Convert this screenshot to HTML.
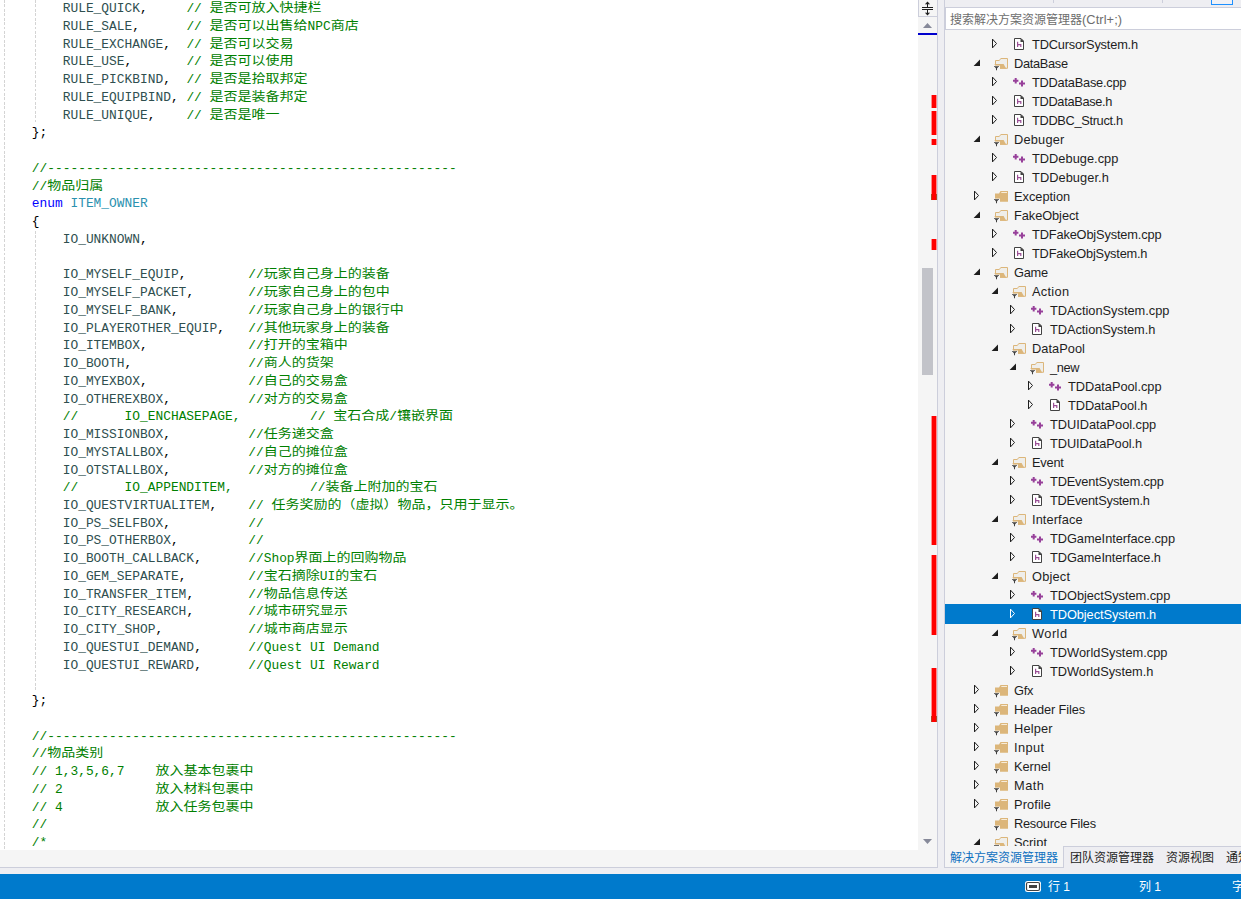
<!DOCTYPE html>
<html lang="zh-CN">
<head>
<meta charset="utf-8">
<title>TDObjectSystem.h - Visual Studio</title>
<style>
html,body{margin:0;padding:0}
body{width:1241px;height:899px;overflow:hidden;position:relative;background:#eeeef2;
  font-family:"Liberation Sans","Noto Sans CJK SC",sans-serif;font-size:12px;color:#1e1e1e}
div,span,svg{position:absolute;box-sizing:border-box}
/* ---------- editor ---------- */
#ed{left:0;top:0;width:918px;height:850px;background:#fff;overflow:hidden}
#hs{left:0;top:850px;width:918px;height:17px;background:#f5f5f5}
#hl{left:0;top:867px;width:918px;height:1px;background:#ccceDB}
.gd{width:1px;background:repeating-linear-gradient(to bottom,#d4d4d4 0,#d4d4d4 2.9px,transparent 2.9px,transparent 4.43px)}
.l{left:0;height:17.75px;line-height:17.75px;white-space:pre;
  font-family:"Liberation Mono","Noto Sans CJK SC",monospace;font-size:12.88px;color:#000}
.l span{top:0;white-space:pre}
.l span.c{top:0;font-size:14px;line-height:17.75px;transform-origin:50% 50%;transform:translateY(0px) scaleY(0.87);font-family:"Liberation Mono","Noto Sans CJK SC",monospace}
.g{color:#008000}.e{color:#2f4f4f}.k{color:#0000ff}.t{color:#2b91af}.p{color:#000}
/* ---------- vertical scrollbar ---------- */
#vs{left:918px;top:0;width:20px;height:868px;background:#f5f5f5;border-right:1px solid #ccceDB;border-bottom:1px solid #ccceDB}
#sp{left:0;top:0;width:20px;height:17px;background:#f5f5f5;border:1px solid #ccceDB;border-top:none}
.red{left:13px;width:6px;background:linear-gradient(to right,#ff8e8e 0,#ff8e8e 1px,#f00 1px,#f00 5px,#ff8e8e 5px)}
.red.dk{background:linear-gradient(to right,#b4461e 0,#b4461e 1px,#f00 1px,#f00 5px,#b4461e 5px)}
#th{left:4px;top:268px;width:11px;height:107px;background:#c2c3c9}
#bl{left:0;top:33px;width:19px;height:2px;background:#0000cd}
/* ---------- solution explorer ---------- */
#pl{left:944px;top:0;width:1px;height:868px;background:#ccceDB}
#tb{left:945px;top:0;width:296px;height:7px;background:#eeeef2}
#sb{left:945px;top:7px;width:300px;height:23px;background:#fff;border:1px solid #ccceDB}
#sb span{left:4px;top:1px;line-height:21px;color:#6d6d6d;white-space:nowrap;font-size:12px}
#tr{left:945px;top:30px;width:296px;height:816px;background:#f5f5f5;overflow:hidden}
.r{left:0;width:296px;height:19px}
.r.sel{background:#007acc;color:#fff;height:20px}
.r.sel .x{top:4px}.r.sel .i{top:3px}.r.sel .n{top:1px}
.r .x{top:3px;color:#1e1e1e;overflow:visible}
.r.sel .x{color:#fff}
.r .i{top:2px}
.r .n{top:0;line-height:19px;white-space:nowrap;font-size:12.80px}
/* ---------- tabs ---------- */
#tabs{left:945px;top:846px;width:296px;height:22px;background:#eeeef2;border-top:1px solid #ccceDB}
#tabs span{top:1px;line-height:20px;white-space:nowrap;font-size:12px;color:#1e1e1e}
#at{left:-1px;top:-1px;width:120px;height:22px;background:#f5f5f5;border:1px solid #ccceDB;border-top:none}
/* ---------- status bar ---------- */
#st{left:0;top:874px;width:1241px;height:25px;background:#007acc;color:#fff}
#st span{top:1px;line-height:25px;font-size:12px;white-space:nowrap}
</style>
</head>
<body>
<svg width="0" height="0" style="position:absolute">
<defs>
  <g id="funnel">
    <path d="M0.3 9.6 H7 V14.6 H0.3 Z" fill="#f5f5f5"/>
    <path d="M1 10.2 H6 V11.1 H5.2 L4 12.4 V14.2 H3 V12.4 L1.8 11.1 H1 Z" fill="#424242"/>
  </g>
  <g id="i-fc">
    <path d="M2 4.5 H6 L7.5 2 H15 V12.7 H2 Z" fill="#dcb67a"/>
    <path d="M8.3 3.5 H14" stroke="#f7ecd9" stroke-width="1" fill="none"/>
    <use href="#funnel"/>
  </g>
  <g id="i-fo">
    <path d="M2.5 4.5 H6.3 L7.8 2.5 H14.5 V12.3 H2.5 Z" fill="#efeeea" stroke="#dcb67a" stroke-width="1"/>
    <path d="M1.4 8 H10.6 L13.2 12.8 H3.8 Z" fill="#dcb67a"/>
    <use href="#funnel"/>
  </g>
  <g id="i-h">
    <path d="M3.5 1.5 H10 L12.5 4 V12.5 H3.5 Z" fill="#fff" stroke="#424242" stroke-width="1"/>
    <path d="M9.5 1 L13 4.5 V5 H9.5 Z" fill="#424242"/>
    <path d="M6.6 4.7 V10 M6.6 7.6 H9.8 V10" stroke="#9b4f96" stroke-width="1.2" fill="none"/>
  </g>
  <g id="i-cpp">
    <path d="M2 5.8 H7.4 M4.7 3.1 V8.5" stroke="#97409a" stroke-width="2" fill="none"/>
    <path d="M8 8.4 H14 M11 5.4 V11.4" stroke="#97409a" stroke-width="2" fill="none"/>
  </g>
</defs>
</svg>

<div id="ed">
<div class="gd" style="left:4px;top:0;height:850px"></div>
<div class="gd" style="left:35px;top:0;height:122px"></div>
<div class="gd" style="left:35px;top:231px;height:460px"></div>
<div class="l" style="top:0.13px"><span class="e" style="left:62.72px">RULE_QUICK</span><span class="p" style="left:140.02px">,</span><span class="g" style="left:186.40px">// </span><span class="g c" style="left:209.59px">是否可放入快捷栏</span></div>
<div class="l" style="top:17.87px"><span class="e" style="left:62.72px">RULE_SALE</span><span class="p" style="left:132.29px">,</span><span class="g" style="left:186.40px">// </span><span class="g c" style="left:209.59px">是否可以出售给</span><span class="g" style="left:307.59px">NPC</span><span class="g c" style="left:330.78px">商店</span></div>
<div class="l" style="top:35.62px"><span class="e" style="left:62.72px">RULE_EXCHANGE</span><span class="p" style="left:163.21px">,</span><span class="g" style="left:186.40px">// </span><span class="g c" style="left:209.59px">是否可以交易</span></div>
<div class="l" style="top:53.36px"><span class="e" style="left:62.72px">RULE_USE</span><span class="p" style="left:124.56px">,</span><span class="g" style="left:186.40px">// </span><span class="g c" style="left:209.59px">是否可以使用</span></div>
<div class="l" style="top:71.11px"><span class="e" style="left:62.72px">RULE_PICKBIND</span><span class="p" style="left:163.21px">,</span><span class="g" style="left:186.40px">// </span><span class="g c" style="left:209.59px">是否是拾取邦定</span></div>
<div class="l" style="top:88.85px"><span class="e" style="left:62.72px">RULE_EQUIPBIND</span><span class="p" style="left:170.94px">,</span><span class="g" style="left:186.40px">// </span><span class="g c" style="left:209.59px">是否是装备邦定</span></div>
<div class="l" style="top:106.60px"><span class="e" style="left:62.72px">RULE_UNIQUE</span><span class="p" style="left:147.75px">,</span><span class="g" style="left:186.40px">// </span><span class="g c" style="left:209.59px">是否是唯一</span></div>
<div class="l" style="top:124.34px"><span class="p" style="left:31.80px">};</span></div>
<div class="l" style="top:159.83px"><span class="g" style="left:31.80px">//-----------------------------------------------------</span></div>
<div class="l" style="top:177.58px"><span class="g" style="left:31.80px">//</span><span class="g c" style="left:47.26px">物品归属</span></div>
<div class="l" style="top:195.32px"><span class="k" style="left:31.80px">enum</span><span class="t" style="left:70.45px">ITEM_OWNER</span></div>
<div class="l" style="top:213.07px"><span class="p" style="left:31.80px">{</span></div>
<div class="l" style="top:230.81px"><span class="e" style="left:62.72px">IO_UNKNOWN</span><span class="p" style="left:140.02px">,</span></div>
<div class="l" style="top:266.30px"><span class="e" style="left:62.72px">IO_MYSELF_EQUIP</span><span class="p" style="left:178.67px">,</span><span class="g" style="left:248.24px">//</span><span class="g c" style="left:263.70px">玩家自己身上的装备</span></div>
<div class="l" style="top:284.05px"><span class="e" style="left:62.72px">IO_MYSELF_PACKET</span><span class="p" style="left:186.40px">,</span><span class="g" style="left:248.24px">//</span><span class="g c" style="left:263.70px">玩家自己身上的包中</span></div>
<div class="l" style="top:301.79px"><span class="e" style="left:62.72px">IO_MYSELF_BANK</span><span class="p" style="left:170.94px">,</span><span class="g" style="left:248.24px">//</span><span class="g c" style="left:263.70px">玩家自己身上的银行中</span></div>
<div class="l" style="top:319.54px"><span class="e" style="left:62.72px">IO_PLAYEROTHER_EQUIP</span><span class="p" style="left:217.32px">,</span><span class="g" style="left:248.24px">//</span><span class="g c" style="left:263.70px">其他玩家身上的装备</span></div>
<div class="l" style="top:337.28px"><span class="e" style="left:62.72px">IO_ITEMBOX</span><span class="p" style="left:140.02px">,</span><span class="g" style="left:248.24px">//</span><span class="g c" style="left:263.70px">打开的宝箱中</span></div>
<div class="l" style="top:355.03px"><span class="e" style="left:62.72px">IO_BOOTH</span><span class="p" style="left:124.56px">,</span><span class="g" style="left:248.24px">//</span><span class="g c" style="left:263.70px">商人的货架</span></div>
<div class="l" style="top:372.77px"><span class="e" style="left:62.72px">IO_MYEXBOX</span><span class="p" style="left:140.02px">,</span><span class="g" style="left:248.24px">//</span><span class="g c" style="left:263.70px">自己的交易盒</span></div>
<div class="l" style="top:390.52px"><span class="e" style="left:62.72px">IO_OTHEREXBOX</span><span class="p" style="left:163.21px">,</span><span class="g" style="left:248.24px">//</span><span class="g c" style="left:263.70px">对方的交易盒</span></div>
<div class="l" style="top:408.26px"><span class="g" style="left:62.72px">//</span><span class="g" style="left:124.56px">IO_ENCHASEPAGE,</span><span class="g" style="left:310.08px">// </span><span class="g c" style="left:333.27px">宝石合成</span><span class="g" style="left:389.27px">/</span><span class="g c" style="left:397.00px">镶嵌界面</span></div>
<div class="l" style="top:426.01px"><span class="e" style="left:62.72px">IO_MISSIONBOX</span><span class="p" style="left:163.21px">,</span><span class="g" style="left:248.24px">//</span><span class="g c" style="left:263.70px">任务递交盒</span></div>
<div class="l" style="top:443.75px"><span class="e" style="left:62.72px">IO_MYSTALLBOX</span><span class="p" style="left:163.21px">,</span><span class="g" style="left:248.24px">//</span><span class="g c" style="left:263.70px">自己的摊位盒</span></div>
<div class="l" style="top:461.50px"><span class="e" style="left:62.72px">IO_OTSTALLBOX</span><span class="p" style="left:163.21px">,</span><span class="g" style="left:248.24px">//</span><span class="g c" style="left:263.70px">对方的摊位盒</span></div>
<div class="l" style="top:479.24px"><span class="g" style="left:62.72px">//</span><span class="g" style="left:124.56px">IO_APPENDITEM,</span><span class="g" style="left:310.08px">//</span><span class="g c" style="left:325.54px">装备上附加的宝石</span></div>
<div class="l" style="top:496.99px"><span class="e" style="left:62.72px">IO_QUESTVIRTUALITEM</span><span class="p" style="left:209.59px">,</span><span class="g" style="left:248.24px">// </span><span class="g c" style="left:271.43px">任务奖励的（虚拟）物品，只用于显示。</span></div>
<div class="l" style="top:514.73px"><span class="e" style="left:62.72px">IO_PS_SELFBOX</span><span class="p" style="left:163.21px">,</span><span class="g" style="left:248.24px">//</span></div>
<div class="l" style="top:532.48px"><span class="e" style="left:62.72px">IO_PS_OTHERBOX</span><span class="p" style="left:170.94px">,</span><span class="g" style="left:248.24px">//</span></div>
<div class="l" style="top:550.22px"><span class="e" style="left:62.72px">IO_BOOTH_CALLBACK</span><span class="p" style="left:194.13px">,</span><span class="g" style="left:248.24px">//Shop</span><span class="g c" style="left:294.62px">界面上的回购物品</span></div>
<div class="l" style="top:567.97px"><span class="e" style="left:62.72px">IO_GEM_SEPARATE</span><span class="p" style="left:178.67px">,</span><span class="g" style="left:248.24px">//</span><span class="g c" style="left:263.70px">宝石摘除</span><span class="g" style="left:319.70px">UI</span><span class="g c" style="left:335.16px">的宝石</span></div>
<div class="l" style="top:585.71px"><span class="e" style="left:62.72px">IO_TRANSFER_ITEM</span><span class="p" style="left:186.40px">,</span><span class="g" style="left:248.24px">//</span><span class="g c" style="left:263.70px">物品信息传送</span></div>
<div class="l" style="top:603.46px"><span class="e" style="left:62.72px">IO_CITY_RESEARCH</span><span class="p" style="left:186.40px">,</span><span class="g" style="left:248.24px">//</span><span class="g c" style="left:263.70px">城市研究显示</span></div>
<div class="l" style="top:621.20px"><span class="e" style="left:62.72px">IO_CITY_SHOP</span><span class="p" style="left:155.48px">,</span><span class="g" style="left:248.24px">//</span><span class="g c" style="left:263.70px">城市商店显示</span></div>
<div class="l" style="top:638.95px"><span class="e" style="left:62.72px">IO_QUESTUI_DEMAND</span><span class="p" style="left:194.13px">,</span><span class="g" style="left:248.24px">//Quest UI Demand</span></div>
<div class="l" style="top:656.69px"><span class="e" style="left:62.72px">IO_QUESTUI_REWARD</span><span class="p" style="left:194.13px">,</span><span class="g" style="left:248.24px">//Quest UI Reward</span></div>
<div class="l" style="top:692.18px"><span class="p" style="left:31.80px">};</span></div>
<div class="l" style="top:727.67px"><span class="g" style="left:31.80px">//-----------------------------------------------------</span></div>
<div class="l" style="top:745.42px"><span class="g" style="left:31.80px">//</span><span class="g c" style="left:47.26px">物品类别</span></div>
<div class="l" style="top:763.16px"><span class="g" style="left:31.80px">// 1,3,5,6,7</span><span class="g c" style="left:155.48px">放入基本包裹中</span></div>
<div class="l" style="top:780.91px"><span class="g" style="left:31.80px">// 2</span><span class="g c" style="left:155.48px">放入材料包裹中</span></div>
<div class="l" style="top:798.65px"><span class="g" style="left:31.80px">// 4</span><span class="g c" style="left:155.48px">放入任务包裹中</span></div>
<div class="l" style="top:816.40px"><span class="g" style="left:31.80px">//</span></div>
<div class="l" style="top:834.14px"><span class="g" style="left:31.80px">/*</span></div>
</div>
<div id="hs"></div>
<div id="hl"></div>

<div id="vs">
  <div id="sp">
    <svg style="left:3px;top:1px" width="11" height="15" viewBox="0 0 11 15">
      <path d="M0 6.5 H11 M0 8.5 H11 M5.5 1.2 V6 M5.5 9 V13.8" stroke="#1e1e1e" stroke-width="1" fill="none"/>
      <path d="M3.6 3.4 L5.5 1.3 L7.4 3.4 M3.6 11.6 L5.5 13.7 L7.4 11.6" stroke="#1e1e1e" stroke-width="1.1" fill="none"/>
    </svg>
  </div>
  <svg style="left:5px;top:23px" width="9" height="5" viewBox="0 0 9 5"><path d="M0 5 L4.5 0 L9 5 Z" fill="#868999"/></svg>
  <div id="bl"></div>
  <div class="red" style="top:95px;height:13px"></div><div class="red" style="top:111px;height:24px"></div><div class="red" style="top:139px;height:6px"></div><div class="red" style="top:175px;height:25px"></div><div class="red" style="top:239px;height:11px"></div><div class="red" style="top:416px;height:129px"></div><div class="red" style="top:555px;height:80px"></div><div class="red" style="top:668px;height:54px"></div><div class="red dk" style="top:194px;height:6px"></div><div class="red dk" style="top:716px;height:6px"></div>
  <div id="th"></div>
  <svg style="left:5px;top:839px" width="9" height="5" viewBox="0 0 9 5"><path d="M0 0 L4.5 5 L9 0 Z" fill="#868999"/></svg>
</div>

<div id="pl"></div>
<div id="tb">
  <div style="left:108px;top:0;width:1px;height:3px;background:#ccceDB"></div>
  <div style="left:217px;top:0;width:1px;height:3px;background:#ccceDB"></div>
  <div style="left:266px;top:-3px;width:22px;height:8px;border:1px solid #1e90ff;background:#f1f1f5"></div>
</div>
<div id="sb"><span>搜索解决方案资源管理器<i style="font-style:normal;font-size:12.80px;letter-spacing:0.085px">(Ctrl+;)</i></span></div>
<div id="tr">
<div class="r" style="top:5px"><svg class="x" style="left:46px" width="7" height="11" viewBox="0 0 7 11"><path d="M1.5 1.1 L5.5 5.5 L1.5 9.9 Z" fill="none" stroke="currentColor" stroke-width="1"/></svg><svg class="i" style="left:66px" width="16" height="16" viewBox="0 0 16 16"><use href="#i-h"/></svg><span class="n" style="left:87px;letter-spacing:-0.179px">TDCursorSystem.h</span></div>
<div class="r" style="top:24px"><svg class="x" style="left:28px" width="7" height="11" viewBox="0 0 7 11"><path d="M7 2.6 L7 9 L0.6 9 Z" fill="currentColor"/></svg><svg class="i" style="left:48px" width="16" height="16" viewBox="0 0 16 16"><use href="#i-fo"/></svg><span class="n" style="left:69px;letter-spacing:-0.308px">DataBase</span></div>
<div class="r" style="top:43px"><svg class="x" style="left:46px" width="7" height="11" viewBox="0 0 7 11"><path d="M1.5 1.1 L5.5 5.5 L1.5 9.9 Z" fill="none" stroke="currentColor" stroke-width="1"/></svg><svg class="i" style="left:66px" width="16" height="16" viewBox="0 0 16 16"><use href="#i-cpp"/></svg><span class="n" style="left:87px;letter-spacing:-0.230px">TDDataBase.cpp</span></div>
<div class="r" style="top:62px"><svg class="x" style="left:46px" width="7" height="11" viewBox="0 0 7 11"><path d="M1.5 1.1 L5.5 5.5 L1.5 9.9 Z" fill="none" stroke="currentColor" stroke-width="1"/></svg><svg class="i" style="left:66px" width="16" height="16" viewBox="0 0 16 16"><use href="#i-h"/></svg><span class="n" style="left:87px;letter-spacing:-0.318px">TDDataBase.h</span></div>
<div class="r" style="top:81px"><svg class="x" style="left:46px" width="7" height="11" viewBox="0 0 7 11"><path d="M1.5 1.1 L5.5 5.5 L1.5 9.9 Z" fill="none" stroke="currentColor" stroke-width="1"/></svg><svg class="i" style="left:66px" width="16" height="16" viewBox="0 0 16 16"><use href="#i-h"/></svg><span class="n" style="left:87px;letter-spacing:-0.327px">TDDBC_Struct.h</span></div>
<div class="r" style="top:100px"><svg class="x" style="left:28px" width="7" height="11" viewBox="0 0 7 11"><path d="M7 2.6 L7 9 L0.6 9 Z" fill="currentColor"/></svg><svg class="i" style="left:48px" width="16" height="16" viewBox="0 0 16 16"><use href="#i-fo"/></svg><span class="n" style="left:69px;letter-spacing:0.196px">Debuger</span></div>
<div class="r" style="top:119px"><svg class="x" style="left:46px" width="7" height="11" viewBox="0 0 7 11"><path d="M1.5 1.1 L5.5 5.5 L1.5 9.9 Z" fill="none" stroke="currentColor" stroke-width="1"/></svg><svg class="i" style="left:66px" width="16" height="16" viewBox="0 0 16 16"><use href="#i-cpp"/></svg><span class="n" style="left:87px;letter-spacing:0.025px">TDDebuge.cpp</span></div>
<div class="r" style="top:138px"><svg class="x" style="left:46px" width="7" height="11" viewBox="0 0 7 11"><path d="M1.5 1.1 L5.5 5.5 L1.5 9.9 Z" fill="none" stroke="currentColor" stroke-width="1"/></svg><svg class="i" style="left:66px" width="16" height="16" viewBox="0 0 16 16"><use href="#i-h"/></svg><span class="n" style="left:87px;letter-spacing:0.066px">TDDebuger.h</span></div>
<div class="r" style="top:157px"><svg class="x" style="left:28px" width="7" height="11" viewBox="0 0 7 11"><path d="M1.5 1.1 L5.5 5.5 L1.5 9.9 Z" fill="none" stroke="currentColor" stroke-width="1"/></svg><svg class="i" style="left:48px" width="16" height="16" viewBox="0 0 16 16"><use href="#i-fc"/></svg><span class="n" style="left:69px;letter-spacing:-0.006px">Exception</span></div>
<div class="r" style="top:176px"><svg class="x" style="left:28px" width="7" height="11" viewBox="0 0 7 11"><path d="M7 2.6 L7 9 L0.6 9 Z" fill="currentColor"/></svg><svg class="i" style="left:48px" width="16" height="16" viewBox="0 0 16 16"><use href="#i-fo"/></svg><span class="n" style="left:69px;letter-spacing:-0.069px">FakeObject</span></div>
<div class="r" style="top:195px"><svg class="x" style="left:46px" width="7" height="11" viewBox="0 0 7 11"><path d="M1.5 1.1 L5.5 5.5 L1.5 9.9 Z" fill="none" stroke="currentColor" stroke-width="1"/></svg><svg class="i" style="left:66px" width="16" height="16" viewBox="0 0 16 16"><use href="#i-cpp"/></svg><span class="n" style="left:87px;letter-spacing:-0.153px">TDFakeObjSystem.cpp</span></div>
<div class="r" style="top:214px"><svg class="x" style="left:46px" width="7" height="11" viewBox="0 0 7 11"><path d="M1.5 1.1 L5.5 5.5 L1.5 9.9 Z" fill="none" stroke="currentColor" stroke-width="1"/></svg><svg class="i" style="left:66px" width="16" height="16" viewBox="0 0 16 16"><use href="#i-h"/></svg><span class="n" style="left:87px;letter-spacing:-0.206px">TDFakeObjSystem.h</span></div>
<div class="r" style="top:233px"><svg class="x" style="left:28px" width="7" height="11" viewBox="0 0 7 11"><path d="M7 2.6 L7 9 L0.6 9 Z" fill="currentColor"/></svg><svg class="i" style="left:48px" width="16" height="16" viewBox="0 0 16 16"><use href="#i-fo"/></svg><span class="n" style="left:69px;letter-spacing:-0.239px">Game</span></div>
<div class="r" style="top:252px"><svg class="x" style="left:46px" width="7" height="11" viewBox="0 0 7 11"><path d="M7 2.6 L7 9 L0.6 9 Z" fill="currentColor"/></svg><svg class="i" style="left:66px" width="16" height="16" viewBox="0 0 16 16"><use href="#i-fo"/></svg><span class="n" style="left:87px;letter-spacing:0.295px">Action</span></div>
<div class="r" style="top:271px"><svg class="x" style="left:64px" width="7" height="11" viewBox="0 0 7 11"><path d="M1.5 1.1 L5.5 5.5 L1.5 9.9 Z" fill="none" stroke="currentColor" stroke-width="1"/></svg><svg class="i" style="left:84px" width="16" height="16" viewBox="0 0 16 16"><use href="#i-cpp"/></svg><span class="n" style="left:105px;letter-spacing:-0.007px">TDActionSystem.cpp</span></div>
<div class="r" style="top:290px"><svg class="x" style="left:64px" width="7" height="11" viewBox="0 0 7 11"><path d="M1.5 1.1 L5.5 5.5 L1.5 9.9 Z" fill="none" stroke="currentColor" stroke-width="1"/></svg><svg class="i" style="left:84px" width="16" height="16" viewBox="0 0 16 16"><use href="#i-h"/></svg><span class="n" style="left:105px;letter-spacing:-0.044px">TDActionSystem.h</span></div>
<div class="r" style="top:309px"><svg class="x" style="left:46px" width="7" height="11" viewBox="0 0 7 11"><path d="M7 2.6 L7 9 L0.6 9 Z" fill="currentColor"/></svg><svg class="i" style="left:66px" width="16" height="16" viewBox="0 0 16 16"><use href="#i-fo"/></svg><span class="n" style="left:87px;letter-spacing:0.045px">DataPool</span></div>
<div class="r" style="top:328px"><svg class="x" style="left:64px" width="7" height="11" viewBox="0 0 7 11"><path d="M7 2.6 L7 9 L0.6 9 Z" fill="currentColor"/></svg><svg class="i" style="left:84px" width="16" height="16" viewBox="0 0 16 16"><use href="#i-fo"/></svg><span class="n" style="left:105px;letter-spacing:-0.332px">_new</span></div>
<div class="r" style="top:347px"><svg class="x" style="left:82px" width="7" height="11" viewBox="0 0 7 11"><path d="M1.5 1.1 L5.5 5.5 L1.5 9.9 Z" fill="none" stroke="currentColor" stroke-width="1"/></svg><svg class="i" style="left:102px" width="16" height="16" viewBox="0 0 16 16"><use href="#i-cpp"/></svg><span class="n" style="left:123px;letter-spacing:-0.029px">TDDataPool.cpp</span></div>
<div class="r" style="top:366px"><svg class="x" style="left:82px" width="7" height="11" viewBox="0 0 7 11"><path d="M1.5 1.1 L5.5 5.5 L1.5 9.9 Z" fill="none" stroke="currentColor" stroke-width="1"/></svg><svg class="i" style="left:102px" width="16" height="16" viewBox="0 0 16 16"><use href="#i-h"/></svg><span class="n" style="left:123px;letter-spacing:-0.082px">TDDataPool.h</span></div>
<div class="r" style="top:385px"><svg class="x" style="left:64px" width="7" height="11" viewBox="0 0 7 11"><path d="M1.5 1.1 L5.5 5.5 L1.5 9.9 Z" fill="none" stroke="currentColor" stroke-width="1"/></svg><svg class="i" style="left:84px" width="16" height="16" viewBox="0 0 16 16"><use href="#i-cpp"/></svg><span class="n" style="left:105px;letter-spacing:-0.041px">TDUIDataPool.cpp</span></div>
<div class="r" style="top:404px"><svg class="x" style="left:64px" width="7" height="11" viewBox="0 0 7 11"><path d="M1.5 1.1 L5.5 5.5 L1.5 9.9 Z" fill="none" stroke="currentColor" stroke-width="1"/></svg><svg class="i" style="left:84px" width="16" height="16" viewBox="0 0 16 16"><use href="#i-h"/></svg><span class="n" style="left:105px;letter-spacing:-0.089px">TDUIDataPool.h</span></div>
<div class="r" style="top:423px"><svg class="x" style="left:46px" width="7" height="11" viewBox="0 0 7 11"><path d="M7 2.6 L7 9 L0.6 9 Z" fill="currentColor"/></svg><svg class="i" style="left:66px" width="16" height="16" viewBox="0 0 16 16"><use href="#i-fo"/></svg><span class="n" style="left:87px;letter-spacing:-0.201px">Event</span></div>
<div class="r" style="top:442px"><svg class="x" style="left:64px" width="7" height="11" viewBox="0 0 7 11"><path d="M1.5 1.1 L5.5 5.5 L1.5 9.9 Z" fill="none" stroke="currentColor" stroke-width="1"/></svg><svg class="i" style="left:84px" width="16" height="16" viewBox="0 0 16 16"><use href="#i-cpp"/></svg><span class="n" style="left:105px;letter-spacing:-0.170px">TDEventSystem.cpp</span></div>
<div class="r" style="top:461px"><svg class="x" style="left:64px" width="7" height="11" viewBox="0 0 7 11"><path d="M1.5 1.1 L5.5 5.5 L1.5 9.9 Z" fill="none" stroke="currentColor" stroke-width="1"/></svg><svg class="i" style="left:84px" width="16" height="16" viewBox="0 0 16 16"><use href="#i-h"/></svg><span class="n" style="left:105px;letter-spacing:-0.232px">TDEventSystem.h</span></div>
<div class="r" style="top:480px"><svg class="x" style="left:46px" width="7" height="11" viewBox="0 0 7 11"><path d="M7 2.6 L7 9 L0.6 9 Z" fill="currentColor"/></svg><svg class="i" style="left:66px" width="16" height="16" viewBox="0 0 16 16"><use href="#i-fo"/></svg><span class="n" style="left:87px;letter-spacing:0.089px">Interface</span></div>
<div class="r" style="top:499px"><svg class="x" style="left:64px" width="7" height="11" viewBox="0 0 7 11"><path d="M1.5 1.1 L5.5 5.5 L1.5 9.9 Z" fill="none" stroke="currentColor" stroke-width="1"/></svg><svg class="i" style="left:84px" width="16" height="16" viewBox="0 0 16 16"><use href="#i-cpp"/></svg><span class="n" style="left:105px;letter-spacing:-0.048px">TDGameInterface.cpp</span></div>
<div class="r" style="top:518px"><svg class="x" style="left:64px" width="7" height="11" viewBox="0 0 7 11"><path d="M1.5 1.1 L5.5 5.5 L1.5 9.9 Z" fill="none" stroke="currentColor" stroke-width="1"/></svg><svg class="i" style="left:84px" width="16" height="16" viewBox="0 0 16 16"><use href="#i-h"/></svg><span class="n" style="left:105px;letter-spacing:-0.088px">TDGameInterface.h</span></div>
<div class="r" style="top:537px"><svg class="x" style="left:46px" width="7" height="11" viewBox="0 0 7 11"><path d="M7 2.6 L7 9 L0.6 9 Z" fill="currentColor"/></svg><svg class="i" style="left:66px" width="16" height="16" viewBox="0 0 16 16"><use href="#i-fo"/></svg><span class="n" style="left:87px;letter-spacing:0.207px">Object</span></div>
<div class="r" style="top:556px"><svg class="x" style="left:64px" width="7" height="11" viewBox="0 0 7 11"><path d="M1.5 1.1 L5.5 5.5 L1.5 9.9 Z" fill="none" stroke="currentColor" stroke-width="1"/></svg><svg class="i" style="left:84px" width="16" height="16" viewBox="0 0 16 16"><use href="#i-cpp"/></svg><span class="n" style="left:105px;letter-spacing:-0.036px">TDObjectSystem.cpp</span></div>
<div class="r sel" style="top:574px"><svg class="x" style="left:64px" width="7" height="11" viewBox="0 0 7 11"><path d="M1.5 1.1 L5.5 5.5 L1.5 9.9 Z" fill="none" stroke="currentColor" stroke-width="1"/></svg><svg class="i" style="left:84px" width="16" height="16" viewBox="0 0 16 16"><use href="#i-h"/></svg><span class="n" style="left:105px;letter-spacing:-0.077px">TDObjectSystem.h</span></div>
<div class="r" style="top:594px"><svg class="x" style="left:46px" width="7" height="11" viewBox="0 0 7 11"><path d="M7 2.6 L7 9 L0.6 9 Z" fill="currentColor"/></svg><svg class="i" style="left:66px" width="16" height="16" viewBox="0 0 16 16"><use href="#i-fo"/></svg><span class="n" style="left:87px;letter-spacing:0.460px">World</span></div>
<div class="r" style="top:613px"><svg class="x" style="left:64px" width="7" height="11" viewBox="0 0 7 11"><path d="M1.5 1.1 L5.5 5.5 L1.5 9.9 Z" fill="none" stroke="currentColor" stroke-width="1"/></svg><svg class="i" style="left:84px" width="16" height="16" viewBox="0 0 16 16"><use href="#i-cpp"/></svg><span class="n" style="left:105px;letter-spacing:0.024px">TDWorldSystem.cpp</span></div>
<div class="r" style="top:632px"><svg class="x" style="left:64px" width="7" height="11" viewBox="0 0 7 11"><path d="M1.5 1.1 L5.5 5.5 L1.5 9.9 Z" fill="none" stroke="currentColor" stroke-width="1"/></svg><svg class="i" style="left:84px" width="16" height="16" viewBox="0 0 16 16"><use href="#i-h"/></svg><span class="n" style="left:105px;letter-spacing:-0.012px">TDWorldSystem.h</span></div>
<div class="r" style="top:651px"><svg class="x" style="left:28px" width="7" height="11" viewBox="0 0 7 11"><path d="M1.5 1.1 L5.5 5.5 L1.5 9.9 Z" fill="none" stroke="currentColor" stroke-width="1"/></svg><svg class="i" style="left:48px" width="16" height="16" viewBox="0 0 16 16"><use href="#i-fc"/></svg><span class="n" style="left:69px;letter-spacing:-0.246px">Gfx</span></div>
<div class="r" style="top:670px"><svg class="x" style="left:28px" width="7" height="11" viewBox="0 0 7 11"><path d="M1.5 1.1 L5.5 5.5 L1.5 9.9 Z" fill="none" stroke="currentColor" stroke-width="1"/></svg><svg class="i" style="left:48px" width="16" height="16" viewBox="0 0 16 16"><use href="#i-fc"/></svg><span class="n" style="left:69px;letter-spacing:-0.135px">Header Files</span></div>
<div class="r" style="top:689px"><svg class="x" style="left:28px" width="7" height="11" viewBox="0 0 7 11"><path d="M1.5 1.1 L5.5 5.5 L1.5 9.9 Z" fill="none" stroke="currentColor" stroke-width="1"/></svg><svg class="i" style="left:48px" width="16" height="16" viewBox="0 0 16 16"><use href="#i-fc"/></svg><span class="n" style="left:69px;letter-spacing:0.146px">Helper</span></div>
<div class="r" style="top:708px"><svg class="x" style="left:28px" width="7" height="11" viewBox="0 0 7 11"><path d="M1.5 1.1 L5.5 5.5 L1.5 9.9 Z" fill="none" stroke="currentColor" stroke-width="1"/></svg><svg class="i" style="left:48px" width="16" height="16" viewBox="0 0 16 16"><use href="#i-fc"/></svg><span class="n" style="left:69px;letter-spacing:0.420px">Input</span></div>
<div class="r" style="top:727px"><svg class="x" style="left:28px" width="7" height="11" viewBox="0 0 7 11"><path d="M1.5 1.1 L5.5 5.5 L1.5 9.9 Z" fill="none" stroke="currentColor" stroke-width="1"/></svg><svg class="i" style="left:48px" width="16" height="16" viewBox="0 0 16 16"><use href="#i-fc"/></svg><span class="n" style="left:69px;letter-spacing:-0.069px">Kernel</span></div>
<div class="r" style="top:746px"><svg class="x" style="left:28px" width="7" height="11" viewBox="0 0 7 11"><path d="M1.5 1.1 L5.5 5.5 L1.5 9.9 Z" fill="none" stroke="currentColor" stroke-width="1"/></svg><svg class="i" style="left:48px" width="16" height="16" viewBox="0 0 16 16"><use href="#i-fc"/></svg><span class="n" style="left:69px;letter-spacing:0.480px">Math</span></div>
<div class="r" style="top:765px"><svg class="x" style="left:28px" width="7" height="11" viewBox="0 0 7 11"><path d="M1.5 1.1 L5.5 5.5 L1.5 9.9 Z" fill="none" stroke="currentColor" stroke-width="1"/></svg><svg class="i" style="left:48px" width="16" height="16" viewBox="0 0 16 16"><use href="#i-fc"/></svg><span class="n" style="left:69px;letter-spacing:0.103px">Profile</span></div>
<div class="r" style="top:784px"><svg class="i" style="left:48px" width="16" height="16" viewBox="0 0 16 16"><use href="#i-fc"/></svg><span class="n" style="left:69px;letter-spacing:-0.252px">Resource Files</span></div>
<div class="r" style="top:803px"><svg class="x" style="left:28px" width="7" height="11" viewBox="0 0 7 11"><path d="M7 2.6 L7 9 L0.6 9 Z" fill="currentColor"/></svg><svg class="i" style="left:48px" width="16" height="16" viewBox="0 0 16 16"><use href="#i-fo"/></svg><span class="n" style="left:69px;letter-spacing:0.047px">Script</span></div>
</div>
<div id="tabs">
  <div id="at"></div>
  <span style="left:5px;color:#0e70c0">解决方案资源管理器</span>
  <span style="left:125px">团队资源管理器</span>
  <span style="left:221px">资源视图</span>
  <span style="left:281px">通知</span>
</div>

<div id="st">
  <svg style="left:1025px;top:7px" width="16" height="11" viewBox="0 0 16 11">
    <rect x="0" y="0" width="16" height="11" rx="2.5" fill="#fff"/>
    <rect x="1.5" y="1.5" width="13" height="8" rx="1.5" fill="#fff" stroke="#424242" stroke-width="1.2"/>
    <rect x="4" y="4" width="8" height="3" fill="#424242"/>
  </svg>
  <span style="left:1048px">行 1</span>
  <span style="left:1139px">列 1</span>
  <span style="left:1232px">字符 1</span>
</div>
</body>
</html>
